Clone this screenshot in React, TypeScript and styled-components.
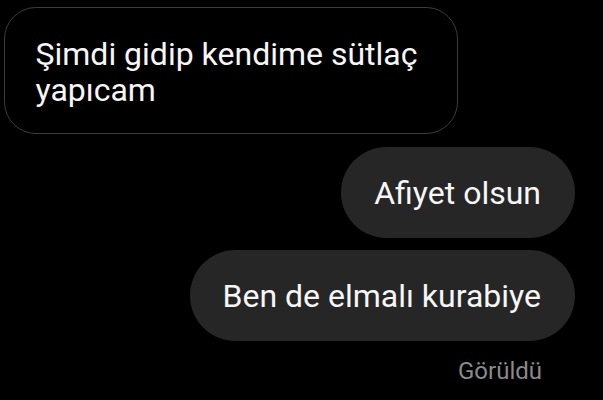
import React from "react";
import styled, { createGlobalStyle } from "styled-components";

const Global = createGlobalStyle`
  html, body { margin: 0; padding: 0; background: #000; }
  body { font-family: Roboto, "Noto Sans", sans-serif; -webkit-font-smoothing: antialiased; }
`;

const Thread = styled.div`
  width: 603px;
  height: 400px;
  background: #000;
  display: flex;
  flex-direction: column;
  padding: 7px 28px 0 4px;
  box-sizing: border-box;
  overflow: hidden;
`;

const Bubble = styled.div<{ $mine?: boolean }>`
  box-sizing: border-box;
  align-self: ${(p) => (p.$mine ? "flex-end" : "flex-start")};
  max-width: 454px;
  color: #f6f6f6;
  font-size: 32px;
  line-height: 36px;
  background: ${(p) => (p.$mine ? "#262626" : "#000")};
  border: ${(p) => (p.$mine ? "none" : "1.5px solid #3c3c3c")};
  border-radius: ${(p) => (p.$mine ? "46px" : "32px")};
  padding: ${(p) => (p.$mine ? "28px 34px 27px 33px" : "27.5px 32px 25.5px 30.5px")};
  margin-bottom: ${(p) => (p.$mine ? "12px" : "13px")};
`;

const Seen = styled.div`
  align-self: flex-end;
  margin-right: 33px;
  margin-top: 4px;
  color: #8a8a8a;
  font-size: 24px;
  line-height: 28px;
`;

export default function App() {
  return (
    <>
      <Global />
      <Thread>
        <Bubble>Şimdi gidip kendime sütlaç yapıcam</Bubble>
        <Bubble $mine>Afiyet olsun</Bubble>
        <Bubble $mine>Ben de elmalı kurabiye</Bubble>
        <Seen>Görüldü</Seen>
      </Thread>
    </>
  );
}
